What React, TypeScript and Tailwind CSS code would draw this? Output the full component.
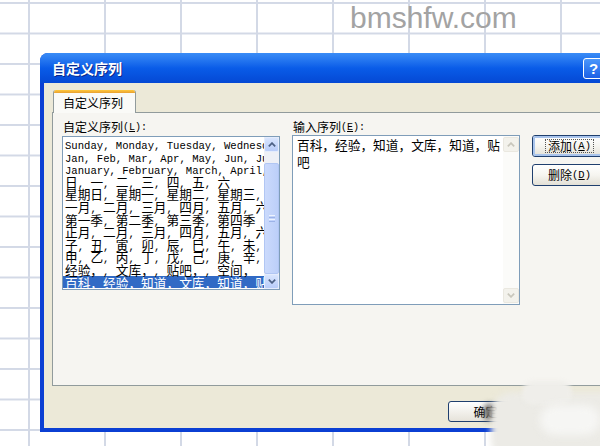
import React from "react";

const CJK_RE = /([\u3000-\u303f\u4e00-\u9fff\uff00-\uffef]+)/;
const IS_CJK = /[\u3000-\u303f\u4e00-\u9fff\uff00-\uffef]/;

// SimSun-like mix: CJK full width, ASCII half width (mono)
function Mixed({ text, cjk, latin }: { text: string; cjk: string; latin: string }) {
  const parts = text.split(CJK_RE).filter((p) => p !== "");
  return (
    <>
      {parts.map((p, i) =>
        IS_CJK.test(p) ? (
          <span key={i} className={"font-['Noto_Sans_CJK_SC',sans-serif] " + cjk}>
            {p}
          </span>
        ) : (
          <span key={i} className={"font-['Liberation_Mono',monospace] " + latin}>
            {p}
          </span>
        )
      )}
    </>
  );
}

function Chevron({ up, color }: { up?: boolean; color: string }) {
  return (
    <svg width="8" height="5" viewBox="0 0 8 5">
      <path
        d={up ? "M0.8 4.3 L4 1.1 L7.2 4.3" : "M0.8 0.7 L4 3.9 L7.2 0.7"}
        fill="none"
        stroke={color}
        strokeWidth="1.7"
      />
    </svg>
  );
}

const listRows = [
  "Sunday, Monday, Tuesday, Wednesday, Thursday, Friday, Saturday",
  "Jan, Feb, Mar, Apr, May, Jun, Jul, Aug, Sep, Oct, Nov, Dec",
  "January, February, March, April, May, June, July",
  "日, 一, 二, 三, 四, 五, 六",
  "星期日, 星期一, 星期二, 星期三, 星期四, 星期五, 星期六",
  "一月, 二月, 三月, 四月, 五月, 六月, 七月",
  "第一季, 第二季, 第三季, 第四季",
  "正月, 二月, 三月, 四月, 五月, 六月, 七月",
  "子, 丑, 寅, 卯, 辰, 巳, 午, 未, 申, 酉, 戌, 亥",
  "甲, 乙, 丙, 丁, 戊, 己, 庚, 辛, 壬, 癸",
  "经验，, 文库，, 贴吧，, 空间，",
];
const selectedRow = "百科，经验，知道，文库，知道，贴吧";

function XpButton({ label, hot, focus }: { label: string; hot: string; focus?: boolean }) {
  return (
    <div className="flex h-[22px] w-[75px] items-center justify-center rounded-[3px] border border-[#1f3f6e] bg-linear-to-b from-[#ffffff] via-[#f6f5f0] to-[#e3e0d6] text-black">
      <div
        className={
          focus
            ? "flex h-full w-full items-center justify-center rounded-[2px] border-[2px] border-[#a9c4ec]"
            : "flex h-full w-full items-center justify-center"
        }
      >
        <div
          className={
            focus
              ? "flex h-[14px] items-center border border-dotted border-[#555] px-[2px]"
              : "flex h-[14px] items-center px-[2px]"
          }
        >
          <span className="font-['Noto_Sans_CJK_SC',sans-serif] text-[12px] leading-none">{label}</span>
          <span className="font-['Liberation_Mono',monospace] text-[10.5px] leading-none">
            (<span className="underline">{hot}</span>)
          </span>
        </div>
      </div>
    </div>
  );
}

export default function App() {
  return (
    <div className="relative h-[446px] w-[600px] overflow-hidden bg-white bg-[linear-gradient(to_right,#d3d9e6_2px,transparent_2px),linear-gradient(to_bottom,#d3d9e6_2px,transparent_2px)] bg-[size:76px_30.5px] bg-[position:28px_2px]">
      {/* watermark */}
      <div className="absolute left-[350px] top-[3px] font-['Liberation_Sans',Arial,sans-serif] text-[30px] leading-[30px] text-[#a3a3a3]">
        bmshfw.com
      </div>

      {/* dialog window */}
      <div className="absolute left-[40px] top-[53px] flex w-[590px] flex-col overflow-hidden rounded-t-[8px] bg-[#0b3fd3]">
        <div className="flex h-[30px] items-center justify-between bg-linear-to-b from-[#3a8cf6] via-[#0a5ce8] to-[#0548d4] pl-[12px] pr-[3px]">
          <span className="font-['Noto_Sans_CJK_SC',sans-serif] text-[14px] font-bold text-white [text-shadow:1px_1px_#0c2a8c]">
            自定义序列
          </span>
          <div className="flex gap-[2px]">
            <div className="flex h-[21px] w-[21px] items-center justify-center rounded-[3px] border border-white bg-linear-to-b from-[#4b97fb] to-[#1d5fe6] font-['Liberation_Sans',sans-serif] text-[15px] font-bold leading-none text-white">
              ?
            </div>
            <div className="flex h-[21px] w-[21px] items-center justify-center rounded-[3px] border border-white bg-linear-to-b from-[#e5735a] to-[#c5401f] text-[13px] font-bold text-white">
              ×
            </div>
          </div>
        </div>

        <div className="mx-[4px] mb-[4px] flex flex-col bg-[#ece9d8] px-[8px] pt-[7px]">
          {/* tab */}
          <div className="relative z-10 -mb-px ml-[1px] flex h-[23px] w-[83px] flex-col overflow-hidden rounded-t-[3px] border-x border-[#919b9c] bg-[#fafaf7]">
            <div className="h-[3px] bg-linear-to-b from-[#ffc83c] to-[#e8a030]" />
            <div className="flex flex-1 items-center pl-[9px] font-['Noto_Sans_CJK_SC',sans-serif] text-[12px] text-black">
              自定义序列
            </div>
          </div>

          {/* tab panel */}
          <div className="flex h-[274px] gap-[12px] border border-[#919b9c] bg-[#f6f5f1] pl-[9px] pt-[6px]">
            {/* left: custom lists */}
            <div className="flex w-[218px] flex-col">
              <div className="flex h-[16px] items-center pl-[1px] text-black">
                <Mixed text="自定义序列" cjk="text-[12px]" latin="text-[10px]" />
                <span className="font-['Liberation_Mono',monospace] text-[10px]">
                  (<span className="underline">L</span>):
                </span>
              </div>
              <div className="mt-[1px] flex h-[154px] border border-[#7f9db9] bg-white">
                <div className="flex-1 overflow-hidden">
                  {listRows.map((r) => (
                    <div key={r} className="h-[12.6px] whitespace-pre pl-[2px] leading-[12.6px] text-black">
                      <Mixed text={r} cjk="text-[12.7px]" latin="text-[10.6px]" />
                    </div>
                  ))}
                  <div className="h-[12.6px] whitespace-pre bg-[#316ac5] pl-[2px] leading-[12.6px] text-white">
                    <Mixed text={selectedRow} cjk="text-[12.7px]" latin="text-[10.6px]" />
                  </div>
                </div>
                <div className="flex w-[15px] flex-col bg-[#eef0f6]">
                  <div className="flex h-[15px] items-center justify-center rounded-[2px] border border-[#e4ecfd] bg-linear-to-b from-[#d9e5fd] to-[#b8ccf9]">
                    <Chevron up color="#4d6185" />
                  </div>
                  <div className="h-[11px]" />
                  <div className="flex flex-1 flex-col items-center justify-center gap-[1px] rounded-[2px] border border-[#b1c6f3] bg-linear-to-r from-[#cbdafc] to-[#bccff9]">
                    <div className="h-px w-[6px] bg-[#eef3fe]" />
                    <div className="h-px w-[6px] bg-[#9cb3e8]" />
                    <div className="h-px w-[6px] bg-[#eef3fe]" />
                    <div className="h-px w-[6px] bg-[#9cb3e8]" />
                  </div>
                  <div className="flex h-[15px] items-center justify-center rounded-[2px] border border-[#e4ecfd] bg-linear-to-b from-[#d9e5fd] to-[#b8ccf9]">
                    <Chevron color="#4d6185" />
                  </div>
                </div>
              </div>
            </div>

            {/* right: list entries */}
            <div className="flex w-[228px] flex-col">
              <div className="flex h-[16px] items-center pl-[1px] text-black">
                <Mixed text="输入序列" cjk="text-[12px]" latin="text-[10px]" />
                <span className="font-['Liberation_Mono',monospace] text-[10px]">
                  (<span className="underline">E</span>):
                </span>
              </div>
              <div className="flex h-[170px] border border-[#7f9db9] bg-white">
                <div className="flex-1 pl-[4px] pt-[1px] font-['Noto_Sans_CJK_SC',sans-serif] text-[12.7px] leading-[16.5px] text-black">
                  <div>百科，经验，知道，文库，知道，贴</div>
                  <div>吧</div>
                </div>
                <div className="flex w-[16px] flex-col bg-[#fbfbf9] py-[1px]">
                  <div className="flex h-[15px] items-center justify-center rounded-[2px] border border-[#eae8e0] bg-[#f3f2ec]">
                    <Chevron up color="#c9c7bc" />
                  </div>
                  <div className="flex-1" />
                  <div className="flex h-[15px] items-center justify-center rounded-[2px] border border-[#eae8e0] bg-[#f3f2ec]">
                    <Chevron color="#c9c7bc" />
                  </div>
                </div>
              </div>
            </div>

            {/* buttons */}
            <div className="flex flex-col gap-[7px] pt-[16px]">
              <XpButton label="添加" hot="A" focus />
              <XpButton label="删除" hot="D" />
            </div>
          </div>

          {/* bottom buttons */}
          <div className="mt-[15px] flex justify-end gap-[6px] pb-[6px] pr-[14px]">
            <div className="flex h-[21px] w-[75px] items-center justify-center rounded-[3px] border border-[#1f3f6e] bg-linear-to-b from-[#ffffff] to-[#e6e3da] font-['Noto_Sans_CJK_SC',sans-serif] text-[12px] text-black">
              确定
            </div>
            <div className="flex h-[21px] w-[75px] items-center justify-center rounded-[3px] border border-[#1f3f6e] bg-linear-to-b from-[#ffffff] to-[#e6e3da] font-['Noto_Sans_CJK_SC',sans-serif] text-[12px] text-black">
              取消
            </div>
          </div>
        </div>
      </div>

      {/* smudge over the lower right corner */}
      <div className="absolute left-[484px] top-[404px] h-[16px] w-[12px] rounded-full bg-[#4a4a4a] blur-[3px]" />
      <div className="absolute left-[491px] top-[392px] h-[70px] w-[135px] rounded-[22px] bg-[#ecebe6] blur-[3px]" />
      <div className="absolute left-[522px] top-[381px] h-[24px] w-[50px] rounded-full bg-[#efeeea] blur-[2px]" />
      <div className="absolute left-[540px] top-[405px] h-[30px] w-[60px] rounded-full bg-[#f6f6f4] blur-[4px]" />
    </div>
  );
}
